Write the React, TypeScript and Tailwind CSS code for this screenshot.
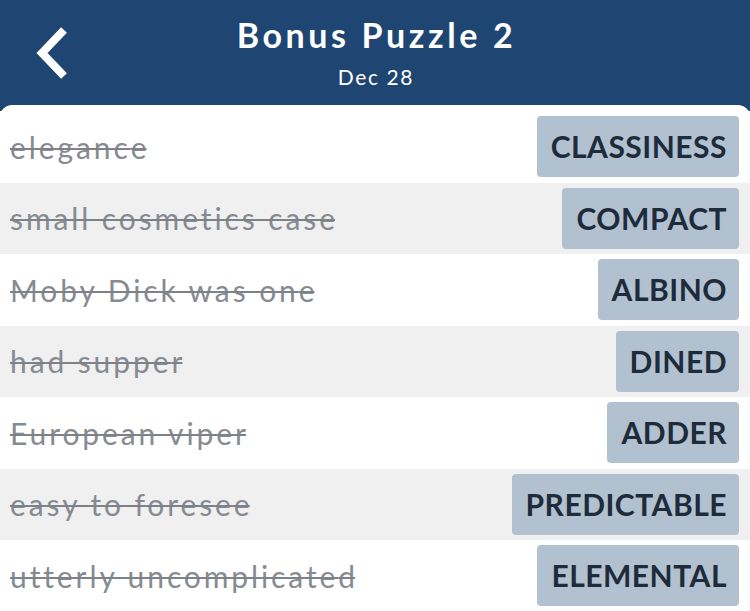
import React from "react";

const rows: [string, string][] = [
  ["elegance", "CLASSINESS"],
  ["small cosmetics case", "COMPACT"],
  ["Moby Dick was one", "ALBINO"],
  ["had supper", "DINED"],
  ["European viper", "ADDER"],
  ["easy to foresee", "PREDICTABLE"],
  ["utterly uncomplicated", "ELEMENTAL"],
];

export default function App() {
  return (
    <div className="w-[750px] h-[611px] overflow-hidden bg-[#1f4672]" style={{ fontFamily: "Lato, 'Noto Sans', sans-serif" }}>
      <div className="relative h-[105px] flex flex-col items-center text-white">
        <svg className="absolute left-0 top-0" width="100" height="105" viewBox="0 0 100 105">
          <path d="M64 30 L42 53 L64 76" fill="none" stroke="white" strokeWidth="8" strokeLinecap="butt" strokeLinejoin="miter" />
        </svg>
        <div className="mt-[13px] text-[34px] font-bold leading-[44px] tracking-[3.6px] pl-[3px]">Bonus Puzzle 2</div>
        <div className="mt-[7px] text-[21px] leading-[26px] tracking-[1.6px] pl-[2px]">Dec 28</div>
      </div>
      <div className="bg-white rounded-t-[12px] pt-[6px] h-[506px]">
        {rows.map(([clue, ans], i) => (
          <div
            key={i}
            className={`h-[71.5px] flex items-center justify-between pl-[10px] pr-[11px] ${i % 2 === 1 ? "bg-[#f0f0f0]" : "bg-white"}`}
          >
            <span className="text-[30px] leading-[36px] tracking-[2.9px] text-[#868b91] line-through decoration-[2px] decoration-[#7d8288]">
              {clue.slice(0, -1)}
              <span className="tracking-normal">{clue.slice(-1)}</span>
            </span>
            <span className="h-[61px] flex items-center pl-[14px] pr-[12px] rounded-[4px] bg-[#b1c1cf] text-[#1d2b3b] text-[30px] font-bold tracking-[0.5px]">
              {ans}
            </span>
          </div>
        ))}
      </div>
    </div>
  );
}
